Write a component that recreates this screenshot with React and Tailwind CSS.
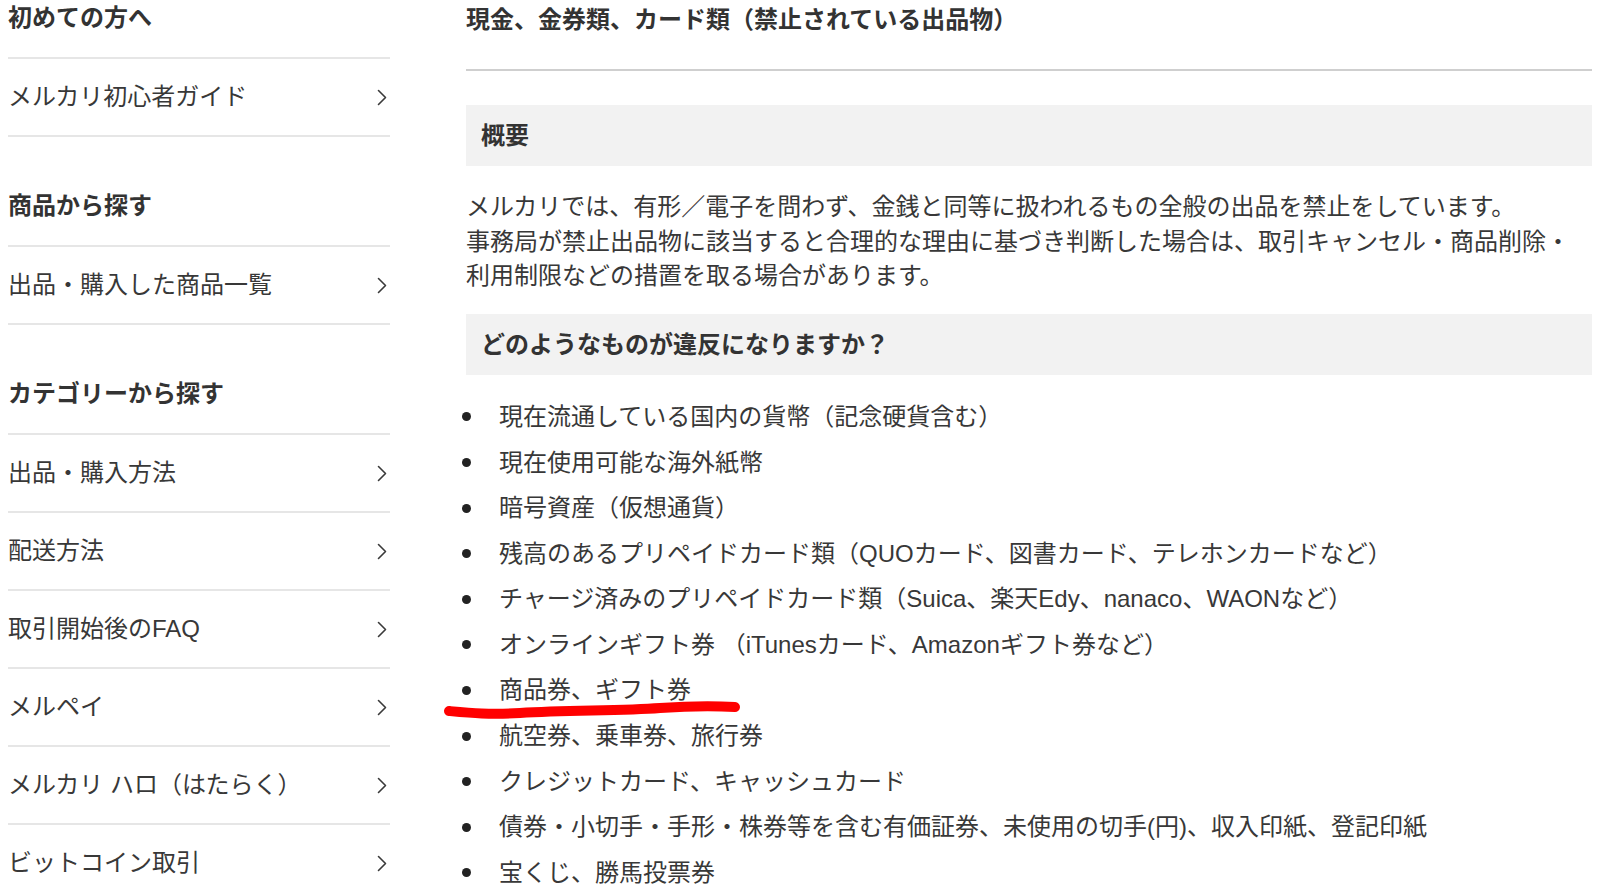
import React from "react";

const FONT = { fontFamily: '"Liberation Sans", "Noto Sans CJK JP", sans-serif' };

function Chevron() {
  return (
    <svg width="10" height="17" viewBox="0 0 10 17" fill="none" className="mr-[3px] shrink-0">
      <path d="M1.5 1.5 L8.5 8.5 L1.5 15.5" stroke="#3a3a3a" strokeWidth="1.6" strokeLinecap="round" strokeLinejoin="round" />
    </svg>
  );
}

function Header({ children, first }) {
  return (
    <div
      className={`${first ? "pt-[2px]" : "pt-[53px]"} pb-[23px] border-b-2 border-[#e6e6e6] text-[24px] leading-[32px] font-bold text-[#333]`}
    >
      {children}
    </div>
  );
}

function Row({ children }) {
  return (
    <div className="h-[78px] flex items-center justify-between border-b-2 border-[#e6e6e6] text-[24px] text-[#383838]">
      <span>{children}</span>
      <Chevron />
    </div>
  );
}

const items = [
  "現在流通している国内の貨幣（記念硬貨含む）",
  "現在使用可能な海外紙幣",
  "暗号資産（仮想通貨）",
  "残高のあるプリペイドカード類（QUOカード、図書カード、テレホンカードなど）",
  "チャージ済みのプリペイドカード類（Suica、楽天Edy、nanaco、WAONなど）",
  "オンラインギフト券 （iTunesカード、Amazonギフト券など）",
  "商品券、ギフト券",
  "航空券、乗車券、旅行券",
  "クレジットカード、キャッシュカード",
  "債券・小切手・手形・株券等を含む有価証券、未使用の切手(円)、収入印紙、登記印紙",
  "宝くじ、勝馬投票券",
];

export default function App() {
  return (
    <div className="relative w-[1600px] h-[895px] overflow-hidden bg-white flex" style={FONT}>
      <aside className="ml-[8px] w-[382px] shrink-0">
        <Header first>初めての方へ</Header>
        <Row>メルカリ初心者ガイド</Row>
        <Header>商品から探す</Header>
        <Row>出品・購入した商品一覧</Row>
        <Header>カテゴリーから探す</Header>
        <Row>出品・購入方法</Row>
        <Row>配送方法</Row>
        <Row>取引開始後のFAQ</Row>
        <Row>メルペイ</Row>
        <Row>メルカリ ハロ（はたらく）</Row>
        <Row>ビットコイン取引</Row>
      </aside>

      <main className="ml-[76px] w-[1126px] shrink-0 pt-[4px] text-[#333]">
        <h1 className="text-[24px] leading-[32px] font-bold pb-[33px] border-b-[2px] border-[#cfcfcf]">
          現金、金券類、カード類（禁止されている出品物）
        </h1>
        <div className="mt-[34px] h-[61px] bg-[#f2f2f2] flex items-center px-[15px] text-[24px] font-bold">
          概要
        </div>
        <p className="mt-[24px] mb-[20px] text-[24px] leading-[34.7px] text-[#383838]">
          メルカリでは、有形／電子を問わず、金銭と同等に扱われるもの全般の出品を禁止をしています。
          <br />
          事務局が禁止出品物に該当すると合理的な理由に基づき判断した場合は、取引キャンセル・商品削除・
          <br />
          利用制限などの措置を取る場合があります。
        </p>
        <div className="h-[61px] bg-[#f2f2f2] flex items-center px-[15px] text-[24px] font-bold">
          どのようなものが違反になりますか？
        </div>
        <ul className="mt-[19px]">
          {items.map((t) => (
            <li key={t} className="flex items-center h-[45.6px] text-[24px] text-[#383838]">
              <span className="-ml-[4px] w-[9px] h-[9px] rounded-full bg-[#222] shrink-0" />
              <span className="ml-[28px] whitespace-nowrap">{t}</span>
            </li>
          ))}
        </ul>
      </main>

      <svg
        className="absolute left-0 top-0 pointer-events-none"
        width="1600"
        height="895"
        viewBox="0 0 1600 895"
      >
        <path
          d="M449 711 C470 713, 490 715, 520 713 C570 710, 620 711, 660 708 C690 706, 715 706, 735 707"
          stroke="#ff0000"
          strokeWidth="10"
          strokeLinecap="round"
          fill="none"
        />
      </svg>
    </div>
  );
}
